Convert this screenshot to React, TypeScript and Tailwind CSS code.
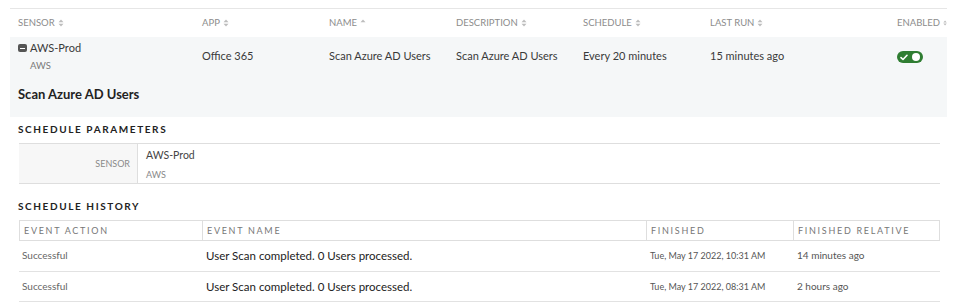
import React from "react";

const font = { fontFamily: "Lato, 'Open Sans', sans-serif" };

function SortIcon({ mode = "both" }: { mode?: "both" | "up" }) {
  return (
    <svg width="6" height="8" viewBox="0 0 6 8" className="ml-[3px] inline-block">
      <path d="M3 0.5 L5.5 3.3 H0.5 Z" fill="#bdbdbd" />
      {mode === "both" && <path d="M3 7.5 L5.5 4.7 H0.5 Z" fill="#bdbdbd" />}
    </svg>
  );
}

function Head({ label, mode }: { label: string; mode?: "both" | "up" }) {
  return (
    <div className="flex items-center text-[9.5px] text-[#8c8c8c] uppercase">
      {label}
      <SortIcon mode={mode} />
    </div>
  );
}

function Toggle() {
  return (
    <div className="w-[26px] h-[12px] rounded-full bg-[#2f7d32] flex items-center justify-between px-[3px]">
      <svg width="8" height="7" viewBox="0 0 8 7">
        <path d="M1 3.6 L3 5.5 L7 1.3" stroke="#fff" strokeWidth="1.6" fill="none" strokeLinecap="round" strokeLinejoin="round" />
      </svg>
      <div className="w-[8px] h-[8px] rounded-full bg-white" />
    </div>
  );
}

const cols = "grid grid-cols-[184px_127px_127px_127px_127px_1fr_50px] pl-2";

export default function App() {
  const history = [
    { action: "Successful", name: "User Scan completed. 0 Users processed.", finished: "Tue, May 17 2022, 10:31 AM", rel: "14 minutes ago" },
    { action: "Successful", name: "User Scan completed. 0 Users processed.", finished: "Tue, May 17 2022, 08:31 AM", rel: "2 hours ago" },
  ];

  return (
    <div className="w-[958px] h-[303px] bg-white pt-2 px-[10px] overflow-hidden text-[#3a3a3a]" style={font}>
      {/* Main schedules table */}
      <div className="w-[937px] border-t border-[#e6e6e6]">
        <div className={`${cols} h-[28px] items-center`}>
          <Head label="Sensor" />
          <Head label="App" />
          <Head label="Name" mode="up" />
          <Head label="Description" />
          <Head label="Schedule" />
          <Head label="Last Run" />
          <Head label="Enabled" />
        </div>

        <div className="bg-[#f5f7f8]">
          <div className={`${cols} h-[40px] items-center text-[11px] text-[#3a3a3a]`}>
            <div className="flex flex-col -mt-[1px]">
              <div className="flex items-center">
                <span className="w-[9px] h-[8px] rounded-[2px] bg-[#555] flex items-center justify-center mr-[3px]">
                  <span className="w-[5px] h-[1.5px] bg-white" />
                </span>
                AWS-Prod
              </div>
              <div className="text-[9.5px] text-[#7a7a7a] pl-[12px] mt-[2px]">AWS</div>
            </div>
            <div className="-mt-[1px]">Office 365</div>
            <div className="-mt-[1px]">Scan Azure AD Users</div>
            <div className="-mt-[1px]">Scan Azure AD Users</div>
            <div className="-mt-[1px]">Every 20 minutes</div>
            <div className="-mt-[1px]">15 minutes ago</div>
            <div><Toggle /></div>
          </div>
          <div className="h-[40px] pl-2 pt-[8px] text-[13px] font-bold text-[#222]">Scan Azure AD Users</div>
        </div>
      </div>

      {/* Schedule parameters */}
      <div className="pl-2 pt-[5px] text-[10px] font-bold tracking-[0.16em] text-[#222]">SCHEDULE PARAMETERS</div>
      <div className="ml-[9px] mt-[6px] w-[921px] h-[41px] border-y border-[#dedede] flex">
        <div className="w-[119px] bg-[#f7f7f7] border-r border-[#dedede] flex items-center justify-end pr-[7px] text-[9px] text-[#8a8a8a]">
          SENSOR
        </div>
        <div className="pl-[8px] pt-[4px] flex flex-col">
          <div className="text-[10.5px] text-[#444]">AWS-Prod</div>
          <div className="text-[9px] text-[#888] mt-[4px]">AWS</div>
        </div>
      </div>

      {/* Schedule history */}
      <div className="pl-2 pt-[15px] text-[10px] font-bold tracking-[0.16em] text-[#222]">SCHEDULE HISTORY</div>
      <div className="ml-[9px] mt-[6px] w-[921px]">
        <div className="grid grid-cols-[183px_444px_147px_1fr] h-[21px] border border-[#dedede] text-[9px] tracking-[0.19em] text-[#777]">
          <div className="flex items-center pl-[4px] border-r border-[#dedede]">EVENT ACTION</div>
          <div className="flex items-center pl-[4px] border-r border-[#dedede]">EVENT NAME</div>
          <div className="flex items-center pl-[4px] border-r border-[#dedede]">FINISHED</div>
          <div className="flex items-center pl-[4px]">FINISHED RELATIVE</div>
        </div>
        {history.map((h, i) => (
          <div key={i} className="grid grid-cols-[183px_444px_147px_1fr] h-[30.5px] items-center border-b border-[#e2e2e2]">
            <div className="pl-[3px] text-[10px] text-[#666]">{h.action}</div>
            <div className="pl-[4px] text-[11.5px] text-[#222]">{h.name}</div>
            <div className="pl-[4px] text-[9px] text-[#555]">{h.finished}</div>
            <div className="pl-[4px] text-[10px] text-[#555]">{h.rel}</div>
          </div>
        ))}
      </div>
    </div>
  );
}
